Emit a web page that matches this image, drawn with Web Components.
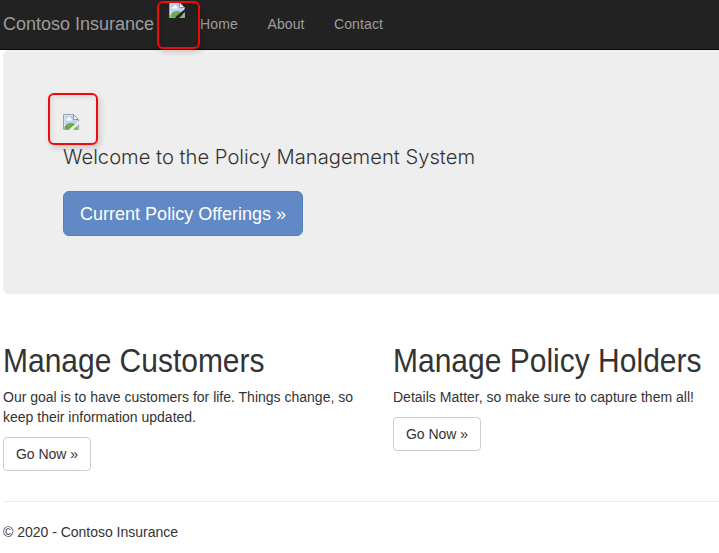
<!DOCTYPE html>
<html lang="en">
<head>
<meta charset="utf-8">
<title>Contoso Insurance</title>
<style>
html,body{margin:0;height:553px;overflow:hidden;background:#fff}
body{font:14px/20px "Liberation Sans",Arial,sans-serif;color:#333}
</style>
</head>
<body>
<policy-page></policy-page>
<script>
function define(name, html, setup) {
  customElements.define(name, class extends HTMLElement {
    connectedCallback() {
      if (this.shadowRoot) return;
      const t = document.createElement('template');
      t.innerHTML = html;
      this.attachShadow({mode: 'open'}).append(t.content.cloneNode(true));
      if (setup) setup(this, this.shadowRoot);
    }
  });
}

// One line of text set to a given width, by tracking or by horizontal scale.
define('fit-text', `<style>
:host{display:block;white-space:nowrap}
span{display:inline-block;transform-origin:0 50%}
</style><span><slot></slot></span>`, (el, root) => {
  const w = +el.getAttribute('w'), s = root.querySelector('span');
  const natural = s.getBoundingClientRect().width;
  el.style.width = w + 'px';
  if (el.hasAttribute('scale')) s.style.transform = 'scaleX(' + w / natural + ')';
  else s.style.letterSpacing = (w - natural) / el.textContent.length + 'px';
});

define('missing-image', `<style>:host{display:block;width:16px;height:16px}svg{display:block}</style>
<svg width="16" height="16" viewBox="0 0 16 16">
<path d="M.5.5h10l5 5v10H.5z" fill="#f4f6fb"/>
<path d="M1.500 1.500h9v4.500h4v9h-13z" fill="#c0d0f2"/>
<path d="M3 6.500q-.3-2 1.500-2Q5 2.800 6.500 3.200 7.700 3.300 7.800 4.800 9.200 5 9 6.500z" fill="#fff"/>
<path d="M1.500 15v-2Q4 9 8 9q3 0 4.500 2l2 1v3z" fill="#68ad45"/>
<path d="M.5 15.500V.5h10l5 5v10z" fill="none" stroke="#9da3ad"/>
<path d="M10.500 .8v4.700h4.800z" fill="#fff" stroke="#9198a3"/>
<path d="M16 7v3l-6 6H6.500v-1l3.500-3z" fill="var(--gap,#eee)"/>
</svg>`);

define('red-marker', `<style>
:host{position:absolute;box-sizing:border-box;border:2px solid #f00b0b;border-radius:6px;box-shadow:2px 3px 6px rgba(0,0,0,.16),inset 2px 2px 5px rgba(0,0,0,.08)}
</style>`);

define('nav-bar', `<style>
:host{display:flex;box-sizing:border-box;height:50px;padding-left:3px;background:#222;border-bottom:1px solid #080808;color:#9d9d9d;position:relative;z-index:1}
.brand{font-size:18px;line-height:20px;padding-top:14px}
missing-image{--gap:#222;margin:2px 15px 0}
nav{display:flex;gap:29.5px;padding-top:14px}
red-marker{left:156.500px;top:.5px;width:43px;height:48px}
</style>
<fit-text class="brand" w="151">Contoso Insurance</fit-text>
<missing-image></missing-image>
<nav><fit-text w="38">Home</fit-text><fit-text w="37">About</fit-text><fit-text w="49">Contact</fit-text></nav>
<red-marker></red-marker>`);

define('hero-panel', `<style>
:host{display:block;box-sizing:border-box;position:relative;height:244px;margin-left:3px;padding:64px 60px 0;background:#eee;border-radius:6px 0 0 6px}
.lead{font:300 20px/30px Inter,"Liberation Sans",sans-serif;margin-top:12px}
.btn{box-sizing:border-box;width:240px;height:45px;margin-top:19px;padding:10px 16px;background:#6089c6;border:1px solid #557fbd;border-radius:6px;color:#fff;font-size:18px;line-height:24px;display:flex}
red-marker{left:44.500px;top:42.500px;width:50px;height:52px}
</style>
<missing-image></missing-image>
<fit-text class="lead" w="412" scale>Welcome to the Policy Management System</fit-text>
<div class="btn"><fit-text w="206">Current Policy Offerings »</fit-text></div>
<red-marker></red-marker>`);

define('info-card', `<style>
:host{display:block}
.btn{box-sizing:border-box;display:inline-flex;width:88px;height:34px;margin-top:10px;border:1px solid #ccc;border-radius:4px;padding:6px 12px}
</style>
<slot name="title"></slot>
<slot></slot>
<div class="btn"><fit-text w="62">Go Now »</fit-text></div>`);

define('policy-page', `<style>
:host{display:block}
.row{display:grid;grid-template-columns:390px 1fr;padding:49px 0 0 3px;height:158px}
[slot=title]{font-size:33px;line-height:36px;margin-bottom:8px}
footer{margin-left:3px;border-top:1px solid #eee;padding-top:20px}
</style>
<nav-bar></nav-bar>
<hero-panel></hero-panel>
<div class="row">
<info-card><fit-text slot="title" w="261.5" scale>Manage Customers</fit-text>
<fit-text w="350">Our goal is to have customers for life. Things change, so</fit-text>
<fit-text w="193">keep their information updated.</fit-text></info-card>
<info-card><fit-text slot="title" w="308.5" scale>Manage Policy Holders</fit-text>
<fit-text w="301">Details Matter, so make sure to capture them all!</fit-text></info-card>
</div>
<footer><fit-text w="175">© 2020 - Contoso Insurance</fit-text></footer>`);
</script>
</body>
</html>
